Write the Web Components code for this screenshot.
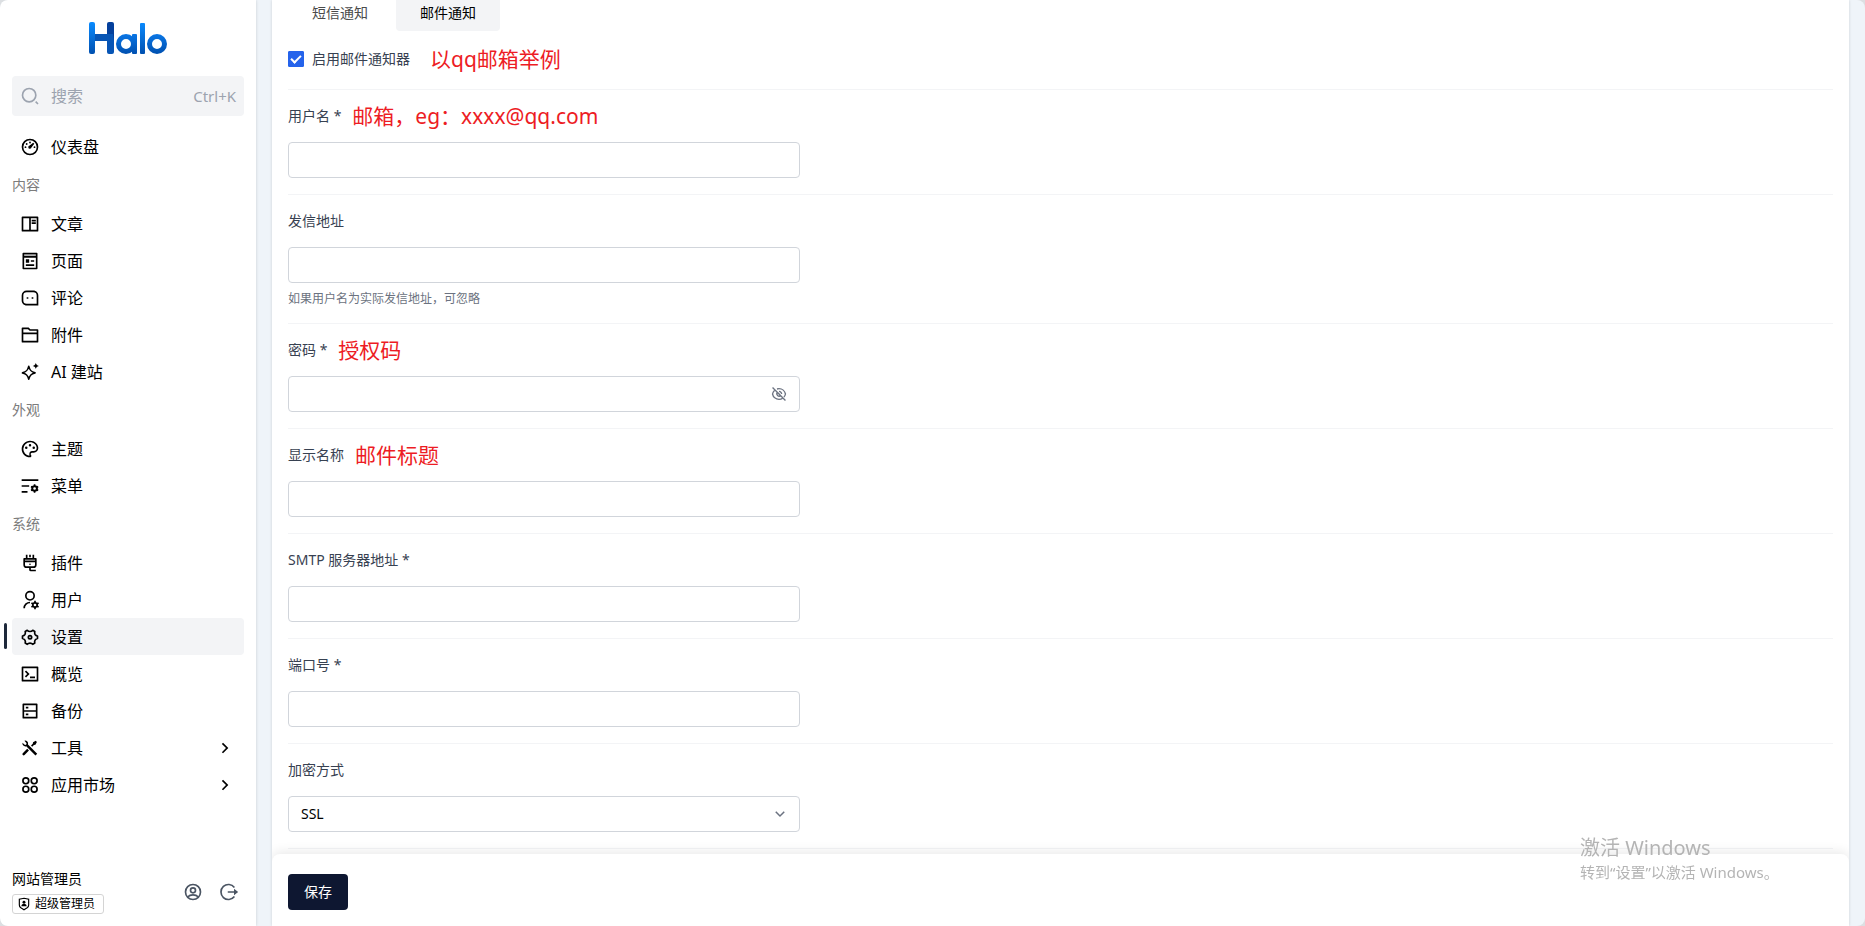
<!DOCTYPE html>
<html lang="zh-CN">
<head>
<meta charset="utf-8">
<meta name="viewport" content="width=device-width, initial-scale=1">
<title>Halo - 设置</title>
<style>
  body { margin: 0; background: #dcdfe2; font-family: "Noto Sans", "Noto Sans CJK SC", sans-serif; font-size: 14px; line-height: 20px; color: #000; }
</style>
</head>
<body>
<halo-app></halo-app>
<script>
const ICONS = {
  dashboard: '<circle cx="12" cy="12" r="9" fill="none" stroke="currentColor" stroke-width="2"/><path d="M15.8 6.8l1.4 1.4-3.3 4.2a2 2 0 1 1-2.3-2.3z"/><circle cx="12" cy="6.6" r="1.1"/><circle cx="8" cy="8.4" r="1.1"/><circle cx="6.6" cy="12.2" r="1.1"/><circle cx="17.4" cy="12.2" r="1.1"/>',
  book: '<path d="M2 4a1 1 0 0 1 1-1h18a1 1 0 0 1 1 1v16a1 1 0 0 1-1 1H3a1 1 0 0 1-1-1V4zm9 1H4v14h7V5zm2 0v14h7V5h-7zm1 2h5v2h-5V7zm0 3h5v2h-5v-2z"/>',
  pages: '<path d="M5 8v12h14V8H5zm0-2h14V4H5v2zm15 16H4a1 1 0 0 1-1-1V3a1 1 0 0 1 1-1h16a1 1 0 0 1 1 1v18a1 1 0 0 1-1 1zM7 10h4v4H7v-4zm0 6h10v2H7v-2zm6-5h4v2h-4v-2z"/><path d="M4 3h16v4H4z" opacity=".3"/>',
  message: '<path d="M2 8.99A5.99 5.99 0 0 1 8 3h8c3.3 0 6 2.7 6 5.99V21H8c-3.3 0-6-2.7-6-5.99V8.99zM20 19V8.99A4 4 0 0 0 16 5H8a4 4 0 0 0-4 3.99v6.02A4 4 0 0 0 8 19h12zm-6-8h2v2h-2v-2zm-6 0h2v2H8v-2z"/>',
  folder: '<path d="M12.41 5H21a1 1 0 0 1 1 1v14a1 1 0 0 1-1 1H3a1 1 0 0 1-1-1V4a1 1 0 0 1 1-1h7.41l2 2zM20 11H4v8h16v-8zm0-2V7h-8.41l-2-2H4v4h16z"/>',
  sparkle: '<path d="M10.500 5.300c1.200 4.800 2.700 6.400 7.500 7.700-4.800 1.200-6.300 2.800-7.500 7.600-1.200-4.800-2.700-6.400-7.500-7.600 4.800-1.300 6.300-2.900 7.500-7.700z" fill="none" stroke="currentColor" stroke-width="2" stroke-linejoin="round"/><path d="M19 1c.5 2.300 1.300 3.200 3.700 3.700C20.300 5.200 19.500 6.100 19 8.500c-.5-2.400-1.300-3.300-3.700-3.800C17.700 4.200 18.500 3.300 19 1z"/>',
  palette: '<path d="M12 2c5.52 0 10 3.980 10 8.890a5.560 5.560 0 0 1-5.560 5.550h-1.960a1.670 1.670 0 0 0-1.250 2.780c.27.3.43.7.430 1.110C13.670 21.250 12.900 22 12 22 6.480 22 2 17.520 2 12S6.480 2 12 2zm-.810 16.110a3.660 3.660 0 0 1 3.290-3.670h1.960A3.560 3.560 0 0 0 20 10.890C20 7.140 16.470 4 12 4a8 8 0 0 0-.680 15.970c-.1-.5-.140-1.200-.13-1.860zM7.500 12a1.500 1.500 0 1 1 0-3 1.500 1.500 0 0 1 0 3zm9 0a1.500 1.500 0 1 1 0-3 1.500 1.500 0 0 1 0 3zM12 9a1.500 1.500 0 1 1 0-3 1.500 1.500 0 0 1 0 3z"/>',
  menu: '<path d="M2 4h20v2H2zM2 11h9v2H2zM2 18h7v2H2z"/><circle cx="17.500" cy="15" r="2.800" fill="none" stroke="currentColor" stroke-width="2.400"/><path d="M17.500 10v2.500M17.500 17.500V20M13.200 12.500l2.100 1.200M19.700 16.300l2.100 1.200M13.200 17.500l2.100-1.200M19.700 13.700l2.100-1.200" stroke="currentColor" stroke-width="2"/>',
  plug: '<path d="M13 18v2h6v2h-6a2 2 0 0 1-2-2v-2H8a4 4 0 0 1-4-4V7a1 1 0 0 1 1-1h2V2h2v4h6V2h2v4h2a1 1 0 0 1 1 1v7a4 4 0 0 1-4 4h-3zm-5-2h8a2 2 0 0 0 2-2v-3H6v3c0 1.100.9 2 2 2zm10-8H6v1h12V8zm-6 6.500a1 1 0 1 1 0-2 1 1 0 0 1 0 2zM11 2h2v3h-2V2z"/>',
  user: '<path d="M12 14v2a6 6 0 0 0-6 6H4a8 8 0 0 1 8-8zm0-1a6 6 0 1 1 0-12 6 6 0 0 1 0 12zm0-2a4 4 0 1 0 0-8 4 4 0 0 0 0 8z"/><circle cx="18" cy="18" r="2.600" fill="none" stroke="currentColor" stroke-width="2"/><path d="M18 13v2.500M18 20.500V23M13.700 15.500l2.100 1.200M20.200 19.300l2.100 1.200M13.700 20.500l2.100-1.200M20.200 16.700l2.100-1.200" stroke="currentColor" stroke-width="2"/>',
  settings: '<path d="M8.700 3.900c.9 1.100 2 1.500 3.300 1.500s2.400-.4 3.300-1.500l2.500 1.500c-.5 1.300-.3 2.500.3 3.600.7 1.100 1.600 1.700 2.900 1.900v2.900c-1.300.2-2.200.8-2.900 1.900-.6 1.100-.8 2.300-.3 3.600l-2.500 1.500c-.9-1.100-2-1.500-3.300-1.500s-2.400.4-3.300 1.500l-2.500-1.500c.5-1.300.3-2.500-.3-3.600C5.200 14.600 4.300 14 3 13.800v-2.900c1.300-.2 2.200-.8 2.900-1.900.6-1.100.8-2.300.3-3.600z" fill="none" stroke="currentColor" stroke-width="2" stroke-linejoin="round"/><circle cx="12" cy="12.300" r="2" fill="none" stroke="currentColor" stroke-width="2"/>',
  terminal: '<path d="M3 3h18a1 1 0 0 1 1 1v16a1 1 0 0 1-1 1H3a1 1 0 0 1-1-1V4a1 1 0 0 1 1-1zm1 2v14h16V5H4zm8 10h6v2h-6v-2zm-3.330-3L5.840 9.170l1.410-1.410L11.500 12l-4.240 4.240-1.410-1.410L8.670 12z"/>',
  server: '<path d="M5 11h14V5H5v6zm16-7v16a1 1 0 0 1-1 1H4a1 1 0 0 1-1-1V4a1 1 0 0 1 1-1h16a1 1 0 0 1 1 1zm-2 9H5v6h14v-6zM7 15h3v2H7v-2zm0-8h3v2H7V7z"/>',
  tools: '<path d="M5.330 3.270a3.500 3.500 0 0 1 4.250 4.460l11.080 11.080-2.120 2.120L7.460 9.850A3.500 3.500 0 0 1 3 5.600l2.240 2.240a1.500 1.500 0 1 0 2.120-2.120L5.330 3.270zm10.370 1.880 3.180-1.770 1.410 1.420-1.770 3.180-1.770.35-2.120 2.120-1.410-1.410 2.120-2.120.36-1.770zm-7.070 7.780 2.120 2.120-5.300 5.300a1.500 1.500 0 0 1-2.220-2.010l.1-.11 5.300-5.300z"/>',
  apps: '<g fill="none" stroke="currentColor" stroke-width="2"><circle cx="7" cy="7" r="3.500"/><circle cx="17" cy="7" r="3.500"/><circle cx="7" cy="17" r="3.500"/><circle cx="17" cy="17" r="3.500"/></g>',
  right: '<path d="M13.170 12 8.220 7.050l1.410-1.410L16 12l-6.360 6.360-1.410-1.410z"/>',
  down: '<path d="m12 13.170 4.950-4.950 1.410 1.410L12 16 5.640 9.640l1.410-1.410z"/>',
  search: '<path d="M11 2a9 9 0 1 1 0 18 9 9 0 0 1 0-18zm0 2a7 7 0 1 0 0 14 7 7 0 0 0 0-14zm8.500 14.100 2.800 2.800-1.400 1.400-2.800-2.800z"/>',
  account: '<g fill="none" stroke="currentColor" stroke-width="2"><circle cx="12" cy="12" r="9"/><circle cx="12" cy="10" r="3"/><path d="M5.500 18c1.700-1.700 3.900-2.600 6.500-2.600s4.800.9 6.500 2.600"/></g>',
  logout: '<path d="M18.500 6.500A9 9 0 1 0 18.500 17.500" fill="none" stroke="currentColor" stroke-width="2"/><path d="M10.500 11H18V8l5 4-5 4v-3h-7.500z"/>',
  shield: '<path d="M12 2.100l8 1.800v9.800a6 6 0 0 1-2.600 4.900L12 22l-5.400-3.400A6 6 0 0 1 4 13.700V3.900z" fill="none" stroke="currentColor" stroke-width="2"/><circle cx="12" cy="9" r="2.500"/><path d="M7.500 16a4.500 4.500 0 0 1 9 0z"/>',
  eyeoff: '<g fill="none" stroke="currentColor" stroke-width="2"><path d="M5.500 6.500C3.900 8 2.700 9.900 2.300 12c.9 4.500 4.900 8 9.700 8 2.100 0 4-.6 5.600-1.700M9 4.500c1-.3 2-.5 3-.5 4.800 0 8.800 3.500 9.700 8a9.600 9.600 0 0 1-2.300 4.700"/><path d="M9.300 9.300a3.900 3.900 0 0 0 5.400 5.400M12 8.100a3.900 3.900 0 0 1 3.900 3.900M2.300 2.300l19.400 19.400M11 11l3 3"/></g>'
};

const define = (name, markup, setup) => {
  const template = document.createElement('template');
  template.innerHTML = markup;
  customElements.define(name, class extends HTMLElement {
    constructor() {
      super();
      this.attachShadow({ mode: 'open' }).append(template.content.cloneNode(true));
    }
    connectedCallback() { if (setup) setup(this, this.shadowRoot); }
  });
};

define('halo-icon', `
  <style>
    :host { display: block; flex: none; width: 20px; height: 20px; }
    svg { display: block; width: 100%; height: 100%; fill: currentColor; }
  </style>
  <svg viewBox="0 0 24 24" aria-hidden="true"></svg>`,
  (el, root) => { root.querySelector('svg').innerHTML = ICONS[el.getAttribute('name')]; });

define('halo-logo', `
  <style>
    :host { display: block; width: 78px; height: 32px; }
    svg { display: block; }
  </style>
  <svg width="78" height="32" viewBox="0 0 78 32" role="img" aria-label="Halo">
    <defs>
      <linearGradient id="tall" gradientUnits="userSpaceOnUse" x1="0" y1="0" x2="0" y2="32"><stop offset="0" stop-color="#0a8bff"/><stop offset="1" stop-color="#0050b0"/></linearGradient>
      <linearGradient id="dark" x1="0" y1="0" x2="0" y2="1"><stop offset="0" stop-color="#04409c"/><stop offset=".4" stop-color="#04409c"/><stop offset=".6" stop-color="#0755b5"/><stop offset="1" stop-color="#0755b5"/></linearGradient>
      <linearGradient id="low" gradientUnits="userSpaceOnUse" x1="0" y1="11" x2="0" y2="32"><stop offset="0" stop-color="#0a78e8"/><stop offset="1" stop-color="#0050b0"/></linearGradient>
    </defs>
    <rect x="18" y="0" width="7" height="32" rx="2" fill="url(#dark)"/>
    <rect x="4" y="12" width="20" height="7" fill="#0755b5"/>
    <rect x="0" y="0" width="6" height="32" rx="2" fill="url(#tall)"/>
    <circle cx="37" cy="22" r="7.500" fill="none" stroke="url(#low)" stroke-width="5"/>
    <rect x="43" y="12" width="5" height="20" rx="1" fill="url(#low)"/>
    <rect x="51" y="1" width="5" height="31" rx="1" fill="url(#tall)"/>
    <circle cx="68" cy="22" r="7.500" fill="none" stroke="url(#low)" stroke-width="5"/>
  </svg>`);

define('nav-item', `
  <style>
    :host { display: block; position: relative; }
    a { display: flex; align-items: center; gap: 11px; height: 37px; padding: 0 9px 0 8px; border-radius: 4px; color: #000; font-size: 16px; line-height: 24px; text-decoration: none; }
    span { flex: 1; }
    .arrow { display: none; }
    :host([expandable]) .arrow { display: block; }
    :host([active]) a { background: #f3f4f6; }
    :host([active])::before { content: ""; position: absolute; left: -8px; top: 5px; bottom: 6px; width: 3px; border-radius: 2px; background: #1e293b; }
  </style>
  <a href="#"><halo-icon></halo-icon><span><slot></slot></span><halo-icon class="arrow" name="right"></halo-icon></a>`,
  (el, root) => root.querySelector('halo-icon').replaceWith(Object.assign(document.createElement('template'), { innerHTML: `<halo-icon name="${el.getAttribute('icon')}"></halo-icon>` }).content));

define('nav-group', `
  <style>
    :host { display: block; }
    h2 { margin: 0; font-size: 14px; font-weight: 400; line-height: 40px; color: #7c7c7c; }
  </style>
  <h2></h2><slot></slot>`,
  (el, root) => { root.querySelector('h2').textContent = el.getAttribute('heading'); });

define('search-box', `
  <style>
    :host { display: block; }
    button { display: flex; align-items: center; gap: 11px; width: 100%; height: 40px; padding: 0 8px; border: 0; border-radius: 4px; background: #f3f4f6; color: #9ca3af; font: inherit; font-size: 16px; line-height: 24px; text-align: left; }
    span { flex: 1; }
    kbd { font: inherit; font-size: 15px; }
  </style>
  <button type="button"><halo-icon name="search"></halo-icon><span>搜索</span><kbd>Ctrl+K</kbd></button>`);

define('user-panel', `
  <style>
    :host { display: flex; align-items: center; padding: 0 5px 12px 0; }
    .who { flex: 1; }
    .name { line-height: 20px; margin-bottom: 5px; }
    .role { display: inline-flex; align-items: center; gap: 4px; box-sizing: border-box; height: 20px; padding: 0 8px 0 4px; border: 1px solid #d4d4d4; border-radius: 3px; font-size: 12px; line-height: 18px; }
    .role halo-icon { width: 14px; height: 14px; }
    .who > div { display: flex; }
    .tools { display: flex; gap: 16px; color: #4b5563; }
    button { padding: 0; border: 0; background: none; color: inherit; }
  </style>
  <div class="who"><div class="name">网站管理员</div><div><span class="role"><halo-icon name="shield"></halo-icon>超级管理员</span></div></div>
  <div class="tools"><button type="button" aria-label="个人中心"><halo-icon name="account"></halo-icon></button><button type="button" aria-label="退出登录"><halo-icon name="logout"></halo-icon></button></div>`);

define('side-bar', `
  <style>
    :host { display: flex; flex-direction: column; flex: none; box-sizing: border-box; width: 256px; padding: 22px 12px 0; background: #fff; box-shadow: 0 0 3px rgba(0,0,0,.16); }
    halo-logo { align-self: center; margin-bottom: 22px; }
    search-box { margin-bottom: 12px; }
    user-panel { margin-top: auto; }
  </style>
  <halo-logo></halo-logo>
  <search-box></search-box>
  <nav>
    <nav-item icon="dashboard">仪表盘</nav-item>
    <nav-group heading="内容">
      <nav-item icon="book">文章</nav-item>
      <nav-item icon="pages">页面</nav-item>
      <nav-item icon="message">评论</nav-item>
      <nav-item icon="folder">附件</nav-item>
      <nav-item icon="sparkle">AI 建站</nav-item>
    </nav-group>
    <nav-group heading="外观">
      <nav-item icon="palette">主题</nav-item>
      <nav-item icon="menu">菜单</nav-item>
    </nav-group>
    <nav-group heading="系统">
      <nav-item icon="plug">插件</nav-item>
      <nav-item icon="user">用户</nav-item>
      <nav-item icon="settings" active>设置</nav-item>
      <nav-item icon="terminal">概览</nav-item>
      <nav-item icon="server">备份</nav-item>
      <nav-item icon="tools" expandable>工具</nav-item>
      <nav-item icon="apps" expandable>应用市场</nav-item>
    </nav-group>
  </nav>
  <user-panel></user-panel>`);

define('tab-bar', `
  <style>
    :host { display: flex; gap: 4px; }
    button { padding: 3px 24px 8px; border: 0; border-radius: 0 0 4px 4px; background: none; color: #4b4b4b; font: inherit; line-height: 20px; }
    button[aria-selected=true] { background: #f3f4f6; color: #000; }
  </style>
  <button type="button" role="tab" aria-selected="false">短信通知</button>
  <button type="button" role="tab" aria-selected="true">邮件通知</button>`,
  el => el.setAttribute('role', 'tablist'));

define('red-note', `
  <style>:host { display: block; color: #ed1c24; font-size: 21px; line-height: 20px; white-space: nowrap; }</style>
  <slot></slot>`);

define('check-field', `
  <style>
    :host { display: flex; align-items: center; gap: 20px; padding: 18px 0 20px; border-bottom: 1px solid #f3f4f6; color: #374151; }
    label { display: flex; align-items: center; gap: 8px; }
    input { appearance: none; display: grid; place-items: center; width: 16px; height: 16px; margin: 0; border: 1px solid #d1d5db; border-radius: 1px; }
    input:checked { border-color: #2563eb; background: #2563eb; }
    input:checked::before { content: ""; box-sizing: border-box; width: 10px; height: 6px; border: solid #fff; border-width: 0 0 2px 2px; transform: translateY(-1px) rotate(-45deg); }
  </style>
  <label><input type="checkbox" checked>启用邮件通知器</label><slot></slot>`);

define('form-field', `
  <style>
    :host { display: block; padding: 16px 0; border-bottom: 1px solid #f3f4f6; }
    .head { display: flex; align-items: center; gap: 11px; margin-bottom: 16px; color: #374151; }
    .box { display: grid; grid-template-columns: 1fr auto; align-items: center; max-width: 512px; }
    input, select { grid-area: 1 / 1 / 2 / 3; appearance: none; box-sizing: border-box; width: 100%; height: 36px; padding: 0 12px; border: 1px solid #d1d5db; border-radius: 4px; background: #fff; color: #000; font: inherit; }
    .box button, .box > halo-icon { grid-area: 1 / 2; margin-right: 13px; color: #6b7280; }
    .box button { z-index: 1; padding: 0; border: 0; background: none; }
    .box button halo-icon { width: 16px; height: 16px; }
    .box > halo-icon { margin-right: 11px; width: 18px; height: 18px; z-index: 1; pointer-events: none; }
    p { margin: 8px 0 0; font-size: 12px; line-height: 16px; color: #6b7280; }
  </style>
  <div class="head"><label for="control"></label><slot></slot></div>
  <div class="box"></div>`,
  (el, root) => {
    const kind = el.getAttribute('kind') || 'text';
    root.querySelector('label').textContent = el.getAttribute('label');
    root.querySelector('.box').innerHTML =
      kind === 'select' ? '<select id="control"><option>SSL</option></select><halo-icon name="down"></halo-icon>' :
      kind === 'password' ? '<input id="control" type="password"><button type="button" aria-label="显示密码"><halo-icon name="eyeoff"></halo-icon></button>' :
      '<input id="control" type="text">';
    if (el.hasAttribute('help')) {
      const p = document.createElement('p');
      p.textContent = el.getAttribute('help');
      root.append(p);
    }
  });

define('save-bar', `
  <style>
    :host { display: block; padding: 20px 16px 16px; border-radius: 8px 8px 0 0; background: #fff; box-shadow: 0 -2px 12px rgba(0,0,0,.09); clip-path: inset(-16px 0 0 0); }
    button { display: block; height: 36px; padding: 0 16px; border: 0; border-radius: 4px; background: #0e1731; color: #fff; font: inherit; }
  </style>
  <button type="submit">保存</button>`);

define('settings-card', `
  <style>
    :host { display: flex; flex-direction: column; flex: 1; min-width: 0; background: #fff; box-shadow: 0 0 3px rgba(0,0,0,.14); }
    form { display: flex; flex-direction: column; flex: 1; }
    .fields { padding: 0 16px; }
    save-bar { margin-top: auto; }
  </style>
  <form>
    <div class="fields">
      <tab-bar></tab-bar>
      <check-field><red-note>以qq邮箱举例</red-note></check-field>
      <form-field label="用户名 *"><red-note>邮箱，eg：xxxx@qq.com</red-note></form-field>
      <form-field label="发信地址" help="如果用户名为实际发信地址，可忽略"></form-field>
      <form-field label="密码 *" kind="password"><red-note>授权码</red-note></form-field>
      <form-field label="显示名称"><red-note>邮件标题</red-note></form-field>
      <form-field label="SMTP 服务器地址 *"></form-field>
      <form-field label="端口号 *"></form-field>
      <form-field label="加密方式" kind="select"></form-field>
    </div>
    <save-bar></save-bar>
  </form>`);

define('activation-notice', `
  <style>
    :host { position: fixed; right: 84px; bottom: 43px; width: 201px; color: #b4b4b4; white-space: nowrap; pointer-events: none; }
    strong { display: block; font-size: 20px; font-weight: 400; line-height: 26px; }
    span { display: block; font-size: 15px; line-height: 22px; }
  </style>
  <strong>激活 Windows</strong><span>转到“设置”以激活 Windows。</span>`);

define('halo-app', `
  <style>
    :host { display: flex; min-height: 100vh; border-radius: 8px; overflow: hidden; background: #eff4f9; }
    main { display: flex; flex: 1; min-width: 0; padding: 0 16px; }
  </style>
  <side-bar></side-bar>
  <main><settings-card></settings-card></main>
  <activation-notice></activation-notice>`);
</script>
</body>
</html>
